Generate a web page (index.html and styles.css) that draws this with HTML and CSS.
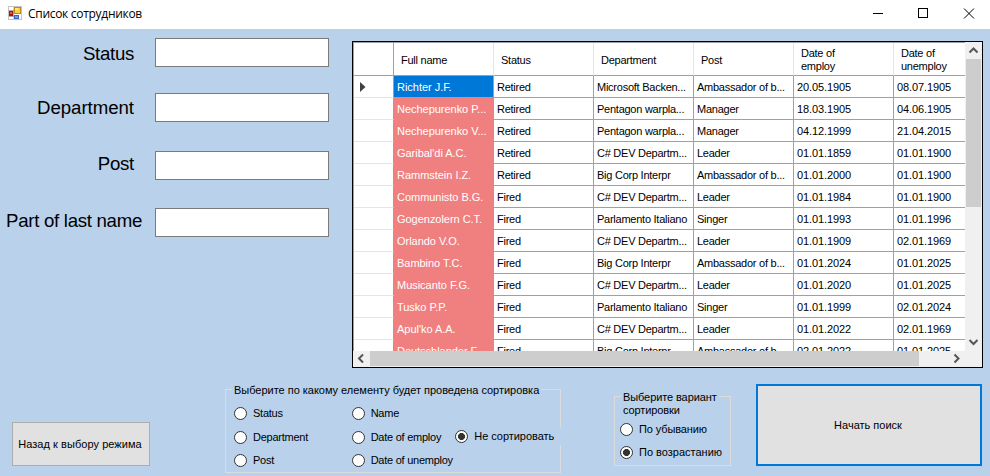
FILE: index.html
```html
<!DOCTYPE html>
<html lang="ru">
<head>
<meta charset="utf-8">
<title>Список сотрудников</title>
<link rel="stylesheet" href="styles.css">
</head>
<body>
<div class="window">
  <header class="titlebar">
    <svg class="app-icon" width="14" height="14" viewBox="0 0 14 14" shape-rendering="crispEdges">
      <rect width="14" height="14" fill="#c3c3c3"/>
      <rect x="1" y="1" width="12" height="12" fill="#fff"/>
      <rect x="5" y="1" width="1" height="12" fill="#d8d8d8"/>
      <rect x="1" y="4" width="5" height="7" fill="#b9a3a3"/>
      <rect x="1" y="5" width="4" height="5" fill="#a5181a"/>
      <rect x="2" y="6" width="2" height="2" fill="#e0584c"/>
      <rect x="6" y="1" width="7" height="7" fill="#c08a10"/>
      <rect x="7" y="2" width="5" height="5" fill="#ffcf3e"/>
      <rect x="7" y="2" width="3" height="2" fill="#ffe58a"/>
      <rect x="6" y="9" width="5" height="4" fill="#3867c8"/>
      <rect x="7" y="10" width="3" height="2" fill="#6f9cf0"/>
    </svg>
    <span class="title">Список сотрудников</span>
    <svg class="window-controls" width="138" height="29" viewBox="0 0 138 29" fill="none" stroke="#000" shape-rendering="crispEdges">
      <path d="M21 13.5h10"/>
      <rect x="66.5" y="8.5" width="9" height="9"/>
      <path d="M112 8.500l10 10M122 8.500l-10 10" shape-rendering="auto"/>
    </svg>
  </header>

  <main class="upper">
    <form class="filters">
      <label class="filter status"><span>Status</span><input type="text"></label>
      <label class="filter department"><span>Department</span><input type="text"></label>
      <label class="filter post"><span>Post</span><input type="text"></label>
      <label class="filter last-name"><span>Part of last name</span><input type="text"></label>
    </form>

    <section class="grid">
      <div class="viewport">
        <table>
          <thead>
            <tr><th class="mark"></th><th>Full name</th><th>Status</th><th>Department</th><th>Post</th><th>Date of<br>employ</th><th>Date of<br>unemploy</th></tr>
          </thead>
          <tbody>
            <tr><td class="mark"><svg width="6" height="10" viewBox="0 0 6 10"><path d="M0 0l5.500 5-5.500 5z" fill="#404040"/></svg></td><td class="name selected">Richter J.F.</td><td>Retired</td><td>Microsoft Backen...</td><td>Ambassador of b...</td><td class="date">20.05.1905</td><td class="date">08.07.1905</td></tr>
            <tr><td class="mark"></td><td class="name">Nechepurenko P...</td><td>Retired</td><td>Pentagon warpla...</td><td>Manager</td><td class="date">18.03.1905</td><td class="date">04.06.1905</td></tr>
            <tr><td class="mark"></td><td class="name">Nechepurenko V...</td><td>Retired</td><td>Pentagon warpla...</td><td>Manager</td><td class="date">04.12.1999</td><td class="date">21.04.2015</td></tr>
            <tr><td class="mark"></td><td class="name">Garibal'di A.C.</td><td>Retired</td><td>C# DEV Departm...</td><td>Leader</td><td class="date">01.01.1859</td><td class="date">01.01.1900</td></tr>
            <tr><td class="mark"></td><td class="name">Rammstein I.Z.</td><td>Retired</td><td>Big Corp Interpr</td><td>Ambassador of b...</td><td class="date">01.01.2000</td><td class="date">01.01.1900</td></tr>
            <tr><td class="mark"></td><td class="name">Communisto B.G.</td><td>Fired</td><td>C# DEV Departm...</td><td>Leader</td><td class="date">01.01.1984</td><td class="date">01.01.1900</td></tr>
            <tr><td class="mark"></td><td class="name">Gogenzolern C.T.</td><td>Fired</td><td>Parlamento Italiano</td><td>Singer</td><td class="date">01.01.1993</td><td class="date">01.01.1996</td></tr>
            <tr><td class="mark"></td><td class="name">Orlando V.O.</td><td>Fired</td><td>C# DEV Departm...</td><td>Leader</td><td class="date">01.01.1909</td><td class="date">02.01.1969</td></tr>
            <tr><td class="mark"></td><td class="name">Bambino T.C.</td><td>Fired</td><td>Big Corp Interpr</td><td>Ambassador of b...</td><td class="date">01.01.2024</td><td class="date">01.01.2025</td></tr>
            <tr><td class="mark"></td><td class="name">Musicanto F.G.</td><td>Fired</td><td>C# DEV Departm...</td><td>Leader</td><td class="date">01.01.2020</td><td class="date">01.01.2025</td></tr>
            <tr><td class="mark"></td><td class="name">Tusko P.P.</td><td>Fired</td><td>Parlamento Italiano</td><td>Singer</td><td class="date">01.01.1999</td><td class="date">02.01.2024</td></tr>
            <tr><td class="mark"></td><td class="name">Apul'ko A.A.</td><td>Fired</td><td>C# DEV Departm...</td><td>Leader</td><td class="date">01.01.2022</td><td class="date">02.01.1969</td></tr>
            <tr><td class="mark"></td><td class="name">Deutschlander F.</td><td>Fired</td><td>Big Corp Interpr</td><td>Ambassador of b...</td><td class="date">02.01.2022</td><td class="date">01.01.2025</td></tr>
          </tbody>
        </table>
      </div>
      <div class="vscroll">
        <svg width="17" height="17" viewBox="0 0 17 17"><path d="M4.500 10.500L8.500 6.500l4 4" fill="none" stroke="#555" stroke-width="2"/></svg>
        <div class="vthumb"></div>
        <svg width="17" height="17" viewBox="0 0 17 17"><path d="M4.500 6l4 4 4-4" fill="none" stroke="#555" stroke-width="2"/></svg>
      </div>
      <div class="hscroll">
        <svg width="17" height="16" viewBox="0 0 17 16"><path d="M10 3.500l-4 4 4 4" fill="none" stroke="#555" stroke-width="2"/></svg>
        <div class="hthumb"></div>
        <svg width="17" height="16" viewBox="0 0 17 16"><path d="M6.500 3.500l4 4-4 4" fill="none" stroke="#555" stroke-width="2"/></svg>
      </div>
      <div class="corner"></div>
    </section>
  </main>

  <footer class="lower">
    <button class="back"><span>Назад к выбору режима</span></button>
    <fieldset class="group sort-by">
      <legend>Выберите по какому елементу будет проведена сортировка</legend>
      <div class="column">
        <label><input type="radio" name="by">Status</label>
        <label><input type="radio" name="by">Department</label>
        <label><input type="radio" name="by">Post</label>
      </div>
      <div class="column">
        <label><input type="radio" name="by">Name</label>
        <label><input type="radio" name="by">Date of employ</label>
        <label><input type="radio" name="by">Date of unemploy</label>
      </div>
      <label class="no-sort"><input type="radio" name="by" checked><span>Не сортировать</span></label>
    </fieldset>
    <fieldset class="group direction">
      <legend>Выберите вариант<br>сортировки</legend>
      <label class="descending"><input type="radio" name="dir"><span>По убыванию</span></label>
      <label class="ascending"><input type="radio" name="dir" checked><span>По возрастанию</span></label>
    </fieldset>
    <button class="search"><span>Начать поиск</span></button>
  </footer>
</div>
</body>
</html>
```
FILE: styles.css
```css
* { box-sizing: border-box; }

body {
  margin: 0;
  font: 11px/13px "Liberation Sans", Arial, sans-serif;
  color: #000;
}

.window {
  width: 990px;
  height: 476px;
  overflow: hidden;
  background: #b9d1ea;
}

.titlebar {
  display: flex;
  align-items: flex-start;
  height: 29px;
  padding-left: 8px;
  background: #fff;
}
.app-icon { margin-top: 6px; }
.title {
  margin: 5px 0 0 6px;
  font: 12px/17px "Open Sans", sans-serif;
  letter-spacing: -0.3px;
  white-space: nowrap;
}
.window-controls { margin-left: auto; }

.upper {
  display: flex;
  height: 339px;
}

.filters {
  display: flex;
  flex-direction: column;
  width: 352px;
  padding-top: 9px;
}
.filter {
  display: flex;
  height: 29px;
  font-size: 18.67px;
  line-height: 29px;
  letter-spacing: -0.3px;
}
.filter span {
  width: 155px;
  padding-right: 21px;
  text-align: right;
  white-space: nowrap;
}
.filter input {
  width: 174px;
  height: 29px;
  border: 1px solid #7a7a7a;
  background: #fff;
}
.status span { line-height: 31px; }
.department { margin-top: 26px; }
.department span { letter-spacing: -0.05px; line-height: 30px; }
.post { margin-top: 29px; }
.last-name { margin-top: 28px; }
.last-name span { padding-right: 13px; }
.post span { line-height: 25px; }
.last-name span { line-height: 25px; }

.grid {
  display: grid;
  grid-template: 309px 16px / 612px 17px;
  width: 631px;
  height: 327px;
  margin-top: 12px;
  border: 1px solid #000;
  background: #f0f0f0;
}
.viewport {
  overflow: hidden;
  background: #fff;
  border: solid #a0a0a0;
  border-width: 1px 0 0 1px;
}
table {
  width: 639px;
  table-layout: fixed;
  border-collapse: separate;
  border-spacing: 0;
}
th, td {
  width: 100px;
  padding: 2px 0 0 3px;
  text-align: left;
  font-weight: normal;
  white-space: nowrap;
  letter-spacing: -0.25px;
  border-right: 1px solid #a0a0a0;
  border-bottom: 1px solid #a0a0a0;
}
th {
  height: 33px;
  padding-left: 7px;
  border-right-color: #e5e5e5;
}
td { height: 22px; }
.mark {
  width: 40px;
  padding: 0 0 0 6px;
  border-right-color: #a0a0a0;
}
td.mark { border-bottom-color: #e5e5e5; }
.mark svg { display: block; }
.name {
  color: #fff;
  background: #f08080;
  letter-spacing: -0.03px;
}
.selected { background: #0078d7; }
.date { letter-spacing: -0.1px; }

.vscroll, .hscroll { display: flex; background: #f0f0f0; }
.vscroll { flex-direction: column; justify-content: space-between; }
.vthumb { width: 15px; height: 148px; margin: 0 auto auto 1px; background: #cdcdcd; }
.hthumb { width: 549px; height: 15px; margin-right: auto; background: #cdcdcd; }

.lower {
  display: flex;
  align-items: flex-start;
  height: 108px;
}
button {
  padding: 0;
  font: inherit;
  color: #000;
  background: #e1e1e1;
  border: 1px solid #adadad;
  white-space: nowrap;
}
.back { width: 138px; height: 44px; margin: 54px 0 0 12px; padding-right: 2px; letter-spacing: 0.05px; }
.search { width: 226px; height: 82px; margin: 16px 0 0 25px; padding-right: 2px; border: 2px solid #0078d7; }

.group {
  display: flex;
  margin: 0;
  padding: 0;
  min-width: 0;
  border: 1px solid #dcdcdc;
}
legend { white-space: nowrap; letter-spacing: -0.02px; }
label { white-space: nowrap; }
.group label {
  display: flex;
  align-items: center;
  height: 17px;
  letter-spacing: -0.25px;
}
input[type="radio"] {
  appearance: none;
  flex: none;
  width: 13px;
  height: 13px;
  margin: 0 6px 0 0;
  border: 1px solid #333;
  border-radius: 50%;
  background: #fff;
}
input[type="radio"]:checked {
  background: radial-gradient(circle, #333 3.2px, #fff 3.8px);
}

.sort-by { width: 336px; height: 90px; margin: 15px 0 0 75px; padding-top: 1px; }
.sort-by legend { height: 13px; margin-left: 6px; padding: 0 2px; line-height: 15px; }
.column {
  display: flex;
  flex-direction: column;
  gap: 6.500px;
  width: 118px;
  height: 64px;
  margin-top: 8px;
  padding-left: 8px;
}
.sort-by .no-sort {
  width: 107px;
  margin: 31px -2px 0 -6px;
  background: #b9d1ea;
  letter-spacing: -0.05px;
}

.direction {
  flex-direction: column;
  width: 117px;
  height: 76px;
  margin: 22px 0 0 53px;
}
.direction legend { height: 13px; margin-left: 6px; padding: 1px 2px 0; line-height: 13px; letter-spacing: -0.1px; }
.direction label { flex: none; margin: 0 0 6px 5px; }
.direction .descending { margin-top: 18px; letter-spacing: -0.12px; }
.direction .ascending { margin-bottom: 0; letter-spacing: 0; }
```
